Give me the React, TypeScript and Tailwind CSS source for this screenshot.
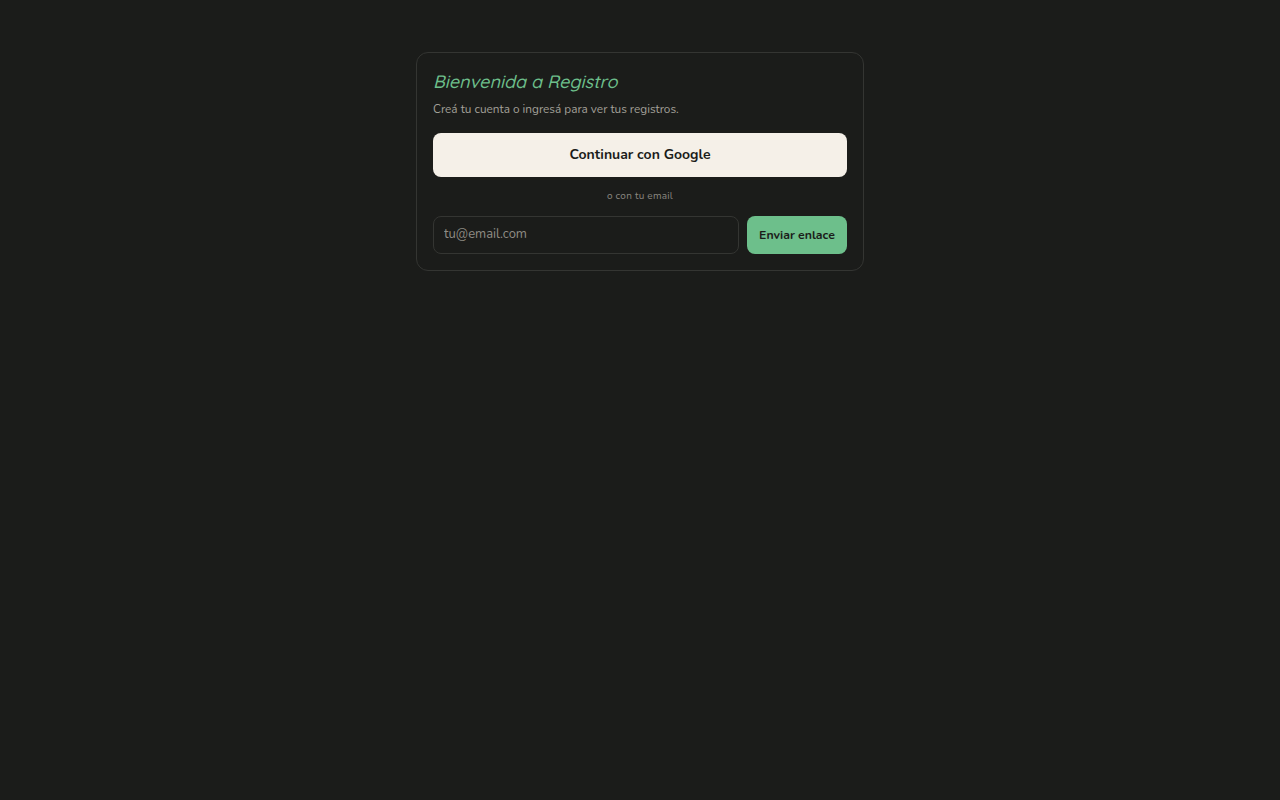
import React from 'react';

export default function App() {
  return (
    <div className="min-h-screen bg-[#1b1c1a] flex justify-center pt-[52px]" style={{ fontFamily: '"Nunito", "Lato", "Noto Sans", sans-serif' }}>
      <div className="w-[448px] h-fit rounded-xl border border-[#343532] bg-[#1b1c1a] p-4">
        <h1 className="text-[18px] leading-[26px] italic font-medium text-[#6dbf8b]" style={{ fontFamily: '"Quicksand", "Lato", "Noto Sans", sans-serif' }}>
          Bienvenida a Registro
        </h1>
        <p className="mt-[6px] text-[11.8px] leading-4 text-[#a3a099]">Creá tu cuenta o ingresá para ver tus registros.</p>
        <button className="mt-4 w-full h-11 rounded-lg bg-[#f5f0e8] pb-[2px] text-[14px] font-bold text-[#1b1c1a]">
          Continuar con Google
        </button>
        <div className="mt-[13px] text-center text-[10px] leading-3 tracking-wide text-[#8a8780]">o con tu email</div>
        <div className="mt-[14px] flex gap-2">
          <input
            type="email"
            placeholder="tu@email.com"
            className="flex-1 h-[38px] rounded-lg border border-[#343532] bg-[#1b1c1a] px-[10px] pb-[2px] text-[13px] text-[#e8e4dc] placeholder:text-[#8f8c85] outline-none"
          />
          <button className="w-[100px] h-[38px] rounded-lg bg-[#6dbf8b] text-[12.3px] font-bold text-[#1b1c1a]">
            Enviar enlace
          </button>
        </div>
      </div>
    </div>
  );
}
